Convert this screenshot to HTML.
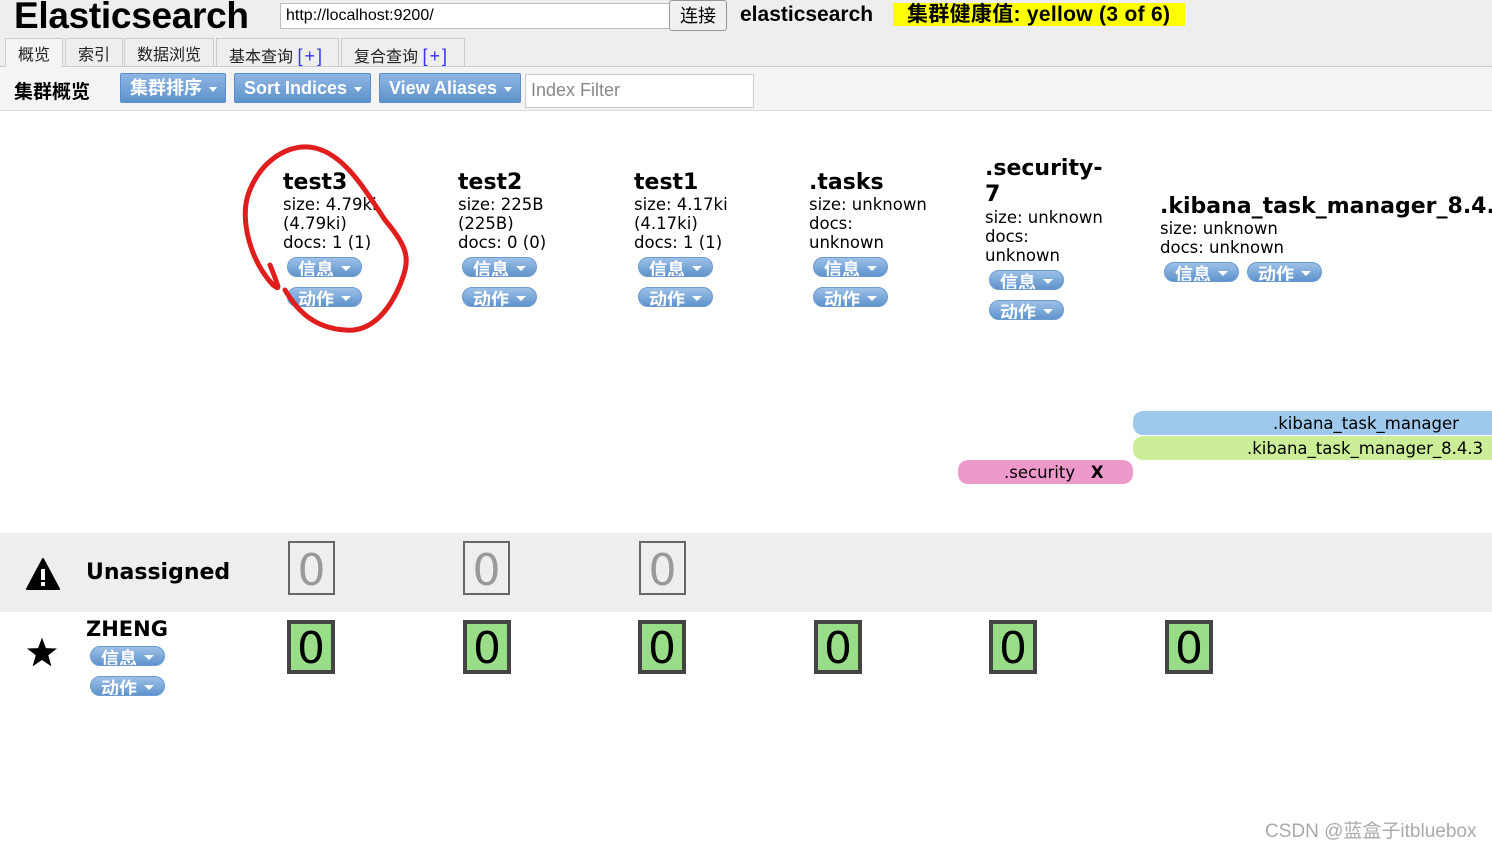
<!DOCTYPE html>
<html><head><meta charset="utf-8"><style>
*{margin:0;padding:0;box-sizing:border-box}
body{width:1492px;height:846px;position:relative;overflow:hidden;background:#fff;font-family:"Liberation Sans","Noto Sans CJK SC",sans-serif}
.a{position:absolute;white-space:nowrap}
.dj{font-family:"DejaVu Sans","Noto Sans CJK SC",sans-serif}
.btn{position:absolute;width:75px;height:20px;border-radius:10px;background:linear-gradient(#9cc0e8,#5f93cc);border:1px solid #6b9bd0;color:#fff;font-weight:bold;font-size:18px;line-height:24px;padding-left:10px;overflow:hidden;font-family:"Liberation Sans","Noto Sans CJK SC",sans-serif}
.btn:after{content:"";position:absolute;right:10px;top:8px;border-left:5px solid transparent;border-right:5px solid transparent;border-top:5px solid #fff}
.tb{position:absolute;top:73px;height:30px;border-radius:2px;background:linear-gradient(#8fb6e3,#5e92cb);border:1px solid #5b8ccc;color:#fff;font-weight:bold;font-size:18px;line-height:28px;padding-left:9px}
.tb:after{content:"";position:absolute;right:8px;top:13px;border-left:4px solid transparent;border-right:4px solid transparent;border-top:5px solid #fff}
.tab{position:absolute;top:38px;height:28px;border:1px solid #ccc;border-bottom:none;background:#eee;font-size:16px;line-height:34px;padding:0 12px;color:#222;font-family:"Liberation Sans","Noto Sans CJK SC",sans-serif}
.tab b{font-weight:normal;color:#33f;font-size:18px;letter-spacing:2px}
.t{font-size:22px;font-weight:bold}
.s{font-size:16.5px;line-height:19px}
.ub{position:absolute;top:541px;width:47px;height:54px;border:2px solid #666;color:#999;font-size:44px;text-align:center;line-height:56px;font-family:"DejaVu Sans",sans-serif}
.gb{position:absolute;top:620px;width:48px;height:54px;border:4px solid #444;background:#99dd88;color:#000;font-size:44px;text-align:center;line-height:50px;font-family:"DejaVu Sans",sans-serif}
</style></head><body>
<div class="a" style="left:0;top:0;width:1492px;height:66px;background:#eee"></div>
<div class="a" style="left:0;top:66px;width:1492px;height:45px;background:#f4f4f4;border-top:1px solid #ccc;border-bottom:1px solid #ddd"></div>
<div class="a" style="left:14px;top:-5px;font-size:37px;font-weight:bold;letter-spacing:-0.3px">Elasticsearch</div>
<div class="a" style="left:280px;top:3px;width:390px;height:26px;background:#fff;border:1px solid #bbb;font-size:16px;line-height:24px;padding-left:5px">http://localhost:9200/</div>
<div class="a" style="left:669px;top:0;width:58px;height:31px;background:#f0f0f0;border:1px solid #999;border-radius:3px;font-size:18px;line-height:30px;text-align:center">连接</div>
<div class="a" style="left:740px;top:3px;font-size:21px;font-weight:bold">elasticsearch</div>
<div class="a" style="left:893px;top:3px;width:292px;height:23px;background:#ff0;font-size:21px;font-weight:bold;line-height:24px;padding-left:14px;letter-spacing:0.3px">集群健康值: yellow (3 of 6)</div>
<div class="tab" style="left:5px;background:#f4f4f4;height:29px">概览</div>
<div class="tab" style="left:65px">索引</div>
<div class="tab" style="left:124px">数据浏览</div>
<div class="tab" style="left:216px;width:123px">基本查询 <b>[+]</b></div>
<div class="tab" style="left:341px;width:124px">复合查询 <b>[+]</b></div>
<div class="a" style="left:14px;top:77px;font-size:19px;font-weight:bold">集群概览</div>
<div class="tb" style="left:120px;width:106px">集群排序</div>
<div class="tb" style="left:234px;width:137px">Sort Indices</div>
<div class="tb" style="left:379px;width:142px">View Aliases</div>
<div class="a" style="left:525px;top:74px;width:229px;height:34px;background:#fff;border:1px solid #ccc;font-size:18px;color:#888;line-height:30px;padding-left:5px">Index Filter</div>

<div class="a dj" style="left:283px;top:170px"><div class="t">test3</div><div class="s">size: 4.79ki<br>(4.79ki)<br>docs: 1 (1)</div></div>
<div class="btn" style="left:287px;top:257px">信息</div><div class="btn" style="left:287px;top:287px">动作</div>
<div class="a dj" style="left:458px;top:170px"><div class="t">test2</div><div class="s">size: 225B<br>(225B)<br>docs: 0 (0)</div></div>
<div class="btn" style="left:462px;top:257px">信息</div><div class="btn" style="left:462px;top:287px">动作</div>
<div class="a dj" style="left:634px;top:170px"><div class="t">test1</div><div class="s">size: 4.17ki<br>(4.17ki)<br>docs: 1 (1)</div></div>
<div class="btn" style="left:638px;top:257px">信息</div><div class="btn" style="left:638px;top:287px">动作</div>
<div class="a dj" style="left:809px;top:170px"><div class="t">.tasks</div><div class="s">size: unknown<br>docs:<br>unknown</div></div>
<div class="btn" style="left:813px;top:257px">信息</div><div class="btn" style="left:813px;top:287px">动作</div>
<div class="a dj" style="left:985px;top:156px"><div class="t" style="line-height:26px">.security-<br>7</div><div class="s">size: unknown<br>docs:<br>unknown</div></div>
<div class="btn" style="left:989px;top:270px">信息</div><div class="btn" style="left:989px;top:300px">动作</div>
<div class="a dj" style="left:1160px;top:194px"><div class="t">.kibana_task_manager_8.4.3</div><div class="s">size: unknown<br>docs: unknown</div></div>
<div class="btn" style="left:1164px;top:262px">信息</div><div class="btn" style="left:1247px;top:262px">动作</div>

<div class="a dj" style="left:1133px;top:411px;width:370px;height:24px;background:#9ec9ec;border-radius:10px 0 0 10px;font-size:16.5px;line-height:26px;padding-left:140px">.kibana_task_manager</div>
<div class="a dj" style="left:1133px;top:436px;width:370px;height:24px;background:#cdee99;border-radius:10px 0 0 10px;font-size:16.5px;line-height:26px;padding-left:114px">.kibana_task_manager_8.4.3</div>
<div class="a dj" style="left:958px;top:460px;width:175px;height:24px;background:#ee99cc;border-radius:10px;font-size:16.5px;line-height:26px;padding-left:46px">.security &nbsp;&nbsp;<b>X</b></div>

<div class="a" style="left:0;top:533px;width:1492px;height:79px;background:#eee"></div>
<svg class="a" style="left:26px;top:558px" width="34" height="32" viewBox="0 0 34 32"><path d="M17 1 L33 31 L1 31 Z" fill="#000" stroke="#000" stroke-linejoin="round" stroke-width="2"/><rect x="15" y="11" width="4" height="11" fill="#fff"/><rect x="15" y="24" width="4" height="4" fill="#fff"/></svg>
<div class="a dj" style="left:86px;top:560px;font-size:22px;font-weight:bold">Unassigned</div>
<div class="ub" style="left:288px">0</div><div class="ub" style="left:463px">0</div><div class="ub" style="left:639px">0</div>
<svg class="a" style="left:26px;top:637px" width="32" height="30" viewBox="0 0 24 23"><path d="M12 0.5 L15 8.5 L23.5 8.8 L16.8 14 L19.2 22.5 L12 17.6 L4.8 22.5 L7.2 14 L0.5 8.8 L9 8.5 Z" fill="#000"/></svg>
<div class="a dj" style="left:86px;top:617px;font-size:21px;font-weight:bold">ZHENG</div>
<div class="btn" style="left:90px;top:646px">信息</div><div class="btn" style="left:90px;top:676px">动作</div>
<div class="gb" style="left:287px">0</div><div class="gb" style="left:463px">0</div><div class="gb" style="left:638px">0</div><div class="gb" style="left:814px">0</div><div class="gb" style="left:989px">0</div><div class="gb" style="left:1165px">0</div>

<svg class="a" style="left:240px;top:140px" width="175" height="200" viewBox="0 0 175 200"><path d="M30 125 C40 150 40 150 33 145 C10 120 0 80 8 55 C20 20 50 2 75 8 C105 15 125 50 145 80 C170 110 170 120 160 145 C145 180 125 192 105 190 C75 188 58 172 45 150" fill="none" stroke="#e01e1e" stroke-width="5" stroke-linecap="round"/></svg>

<div class="a" style="left:1265px;top:816px;font-size:19px;color:#aaa">CSDN @蓝盒子itbluebox</div>
</body></html>
